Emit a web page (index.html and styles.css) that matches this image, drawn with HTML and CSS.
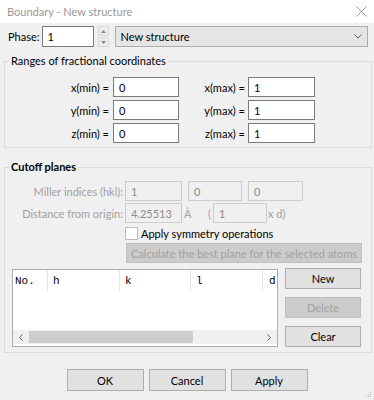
FILE: index.html
```html
<!DOCTYPE html>
<html lang="en">
  <head>
    <meta charset="UTF-8" />
    <meta name="viewport" content="width=device-width, initial-scale=1.0" />
    <title>Boundary - New structure</title>
    <link rel="stylesheet" href="styles.css">
  </head>
  <body>
    <div class="titlebar">
      <span class="title">Boundary - New structure</span>
      <svg class="close" width="11" height="11" viewBox="0 0 11 11">
        <path d="M0.5 0.5 L10.5 10.5 M10.5 0.5 L0.5 10.5" stroke="#9a9a9a" stroke-width="1" fill="none" />
      </svg>
    </div>

    <div class="dialog">
      <div class="phase-row">
        <span class="phase-label">Phase:</span>
        <input class="textbox phase-input" type="text" value="1" readonly />
        <div class="spin">
          <span class="spin-btn">
            <svg width="5" height="3" viewBox="0 0 5 3"><path d="M0 3 L2.5 0 L5 3 Z" fill="#8a8a8a" /></svg>
          </span>
          <span class="spin-btn">
            <svg width="5" height="3" viewBox="0 0 5 3"><path d="M0 0 L2.5 3 L5 0 Z" fill="#8a8a8a" /></svg>
          </span>
        </div>
        <div class="combo">
          <span>New structure</span>
          <svg width="8" height="5" viewBox="0 0 8 5">
            <path d="M0.5 0.5 L4 4 L7.5 0.5" stroke="#606060" stroke-width="1" fill="none" />
          </svg>
        </div>
      </div>

      <fieldset class="group ranges">
        <legend>Ranges of fractional coordinates</legend>
        <div class="range-grid">
          <span class="range-label">x(min) =</span>
          <input class="textbox" type="text" value="0" readonly />
          <span class="range-label second">x(max) =</span>
          <input class="textbox" type="text" value="1" readonly />

          <span class="range-label">y(min) =</span>
          <input class="textbox" type="text" value="0" readonly />
          <span class="range-label second">y(max) =</span>
          <input class="textbox" type="text" value="1" readonly />

          <span class="range-label">z(min) =</span>
          <input class="textbox" type="text" value="0" readonly />
          <span class="range-label second">z(max) =</span>
          <input class="textbox" type="text" value="1" readonly />
        </div>
      </fieldset>

      <fieldset class="group cutoff">
        <legend class="bold">Cutoff planes</legend>
        <div class="cutoff-body">
          <div class="form-row">
            <span class="dim-label">Miller indices (hkl):</span>
            <input class="textbox disabled w57" type="text" value="1" disabled />
            <input class="textbox disabled w54" type="text" value="0" disabled />
            <input class="textbox disabled w55" type="text" value="0" disabled />
          </div>
          <div class="form-row">
            <span class="dim-label">Distance from origin:</span>
            <input class="textbox disabled w57" type="text" value="4.25513" disabled />
            <span class="unit">Å</span>
            <span class="paren">(</span>
            <input class="textbox disabled w54 times" type="text" value="1" disabled />
            <span class="times-d">x d)</span>
          </div>
          <div class="check-row">
            <span class="checkbox"></span>
            <span>Apply symmetry operations</span>
          </div>
          <button class="btn disabled calc" disabled>Calculate the best plane for the selected atoms</button>

          <div class="list-area">
            <div class="listview">
              <div class="list-header">
                <span class="col c-no">No.</span>
                <span class="col c-h">h</span>
                <span class="col c-k">k</span>
                <span class="col c-l">l</span>
                <span class="col c-d">d</span>
              </div>
              <div class="list-rows"></div>
              <div class="hscroll">
                <span class="arrow">
                  <svg width="4" height="7" viewBox="0 0 4 7"><path d="M3.5 0.5 L0.5 3.5 L3.5 6.5" stroke="#606060" fill="none" /></svg>
                </span>
                <div class="track"><div class="thumb"></div></div>
                <span class="arrow">
                  <svg width="4" height="7" viewBox="0 0 4 7"><path d="M0.5 0.5 L3.5 3.5 L0.5 6.5" stroke="#606060" fill="none" /></svg>
                </span>
              </div>
            </div>
            <div class="side-buttons">
              <button class="btn">New</button>
              <button class="btn disabled" disabled>Delete</button>
              <button class="btn">Clear</button>
            </div>
          </div>
        </div>
      </fieldset>

      <div class="footer-buttons">
        <button class="btn wide">OK</button>
        <button class="btn wide">Cancel</button>
        <button class="btn wide">Apply</button>
      </div>
    </div>

    <svg class="grip" width="7" height="7" viewBox="0 0 7 7">
      <rect x="5" y="1" width="1" height="1" fill="#b0b0b0" />
      <rect x="3" y="3" width="1" height="1" fill="#b0b0b0" />
      <rect x="5" y="3" width="1" height="1" fill="#b0b0b0" />
      <rect x="1" y="5" width="1" height="1" fill="#b0b0b0" />
      <rect x="3" y="5" width="1" height="1" fill="#b0b0b0" />
      <rect x="5" y="5" width="1" height="1" fill="#b0b0b0" />
    </svg>
  </body>
</html>
```

FILE: styles.css
```css
* {
  box-sizing: border-box;
}
html,
body {
  margin: 0;
  padding: 0;
}
body {
  width: 374px;
  height: 400px;
  background-color: #f0f0f0;
  font-family: Lato, "Noto Sans", sans-serif;
  font-size: 11px;
  color: #000;
  position: relative;
  overflow: hidden;
}
input,
button {
  font-family: Lato, "Noto Sans", sans-serif;
  font-size: 11px;
}

/* title bar */
.titlebar {
  height: 23px;
  background-color: #fff;
  display: flex;
  align-items: center;
  justify-content: space-between;
  padding: 0 7px 1px 7px;
}
.title {
  color: #999;
  font-size: 11px;
}

/* phase row */
.phase-row {
  display: flex;
  align-items: center;
  height: 21px;
  margin-top: 3px;
  padding-left: 8px;
}
.phase-label {
  margin-right: 2px;
}
.textbox {
  height: 20px;
  border: 1px solid #7a7a7a;
  background-color: #fff;
  padding: 0 5px;
  margin: 0;
  color: #000;
  outline: none;
}
.phase-input {
  width: 52px;
  height: 21px;
}
.spin {
  display: flex;
  flex-direction: column;
  width: 11px;
  height: 21px;
  margin-left: 4px;
  gap: 1px;
}
.spin-btn {
  flex: 1;
  display: flex;
  align-items: center;
  justify-content: center;
  background-color: #ececec;
  border: 1px solid #dadada;
}
.combo {
  display: flex;
  align-items: center;
  justify-content: space-between;
  width: 253px;
  height: 21px;
  margin-left: 6px;
  padding: 0 5px 0 5px;
  background-color: #e5e5e5;
  border: 1px solid #adadad;
}

/* group boxes */
.group {
  border: 1px solid #dcdcdc;
  margin: 0 2px 0 4px;
  min-width: 0;
}
.group legend {
  padding: 0 2px;
  margin-left: 4px;
  line-height: 16px;
}
.group legend.bold {
  font-weight: 700;
}
.ranges {
  margin-top: 6px;
  padding: 8px 0 4px 0;
}
.range-grid {
  display: grid;
  grid-template-columns: 108px 66px 69px 67px;
  row-gap: 3px;
  align-items: center;
}
.range-grid .textbox {
  width: 100%;
}
.range-label {
  text-align: right;
  padding-right: 4px;
  white-space: nowrap;
}
.range-label.second {
  padding-right: 3px;
}

.cutoff {
  margin-top: 11px;
  padding: 6px 10px 5px 0;
}
.cutoff-body {
  padding-left: 7px;
}
.form-row {
  display: flex;
  align-items: center;
  height: 20px;
  margin-bottom: 2px;
}
.dim-label {
  width: 113px;
  text-align: right;
  padding-right: 2px;
  color: #a0a0a0;
  white-space: nowrap;
}
.textbox.disabled {
  background-color: #f0f0f0;
  border-color: #cccccc;
  color: #8d8d8d;
  margin-right: 6px;
}
.w57 {
  width: 57px;
}
.w54 {
  width: 54px;
}
.w55 {
  width: 55px;
}
.unit {
  color: #a0a0a0;
  width: 24px;
  margin-left: -4px;
}
.paren {
  color: #a0a0a0;
  width: 5px;
}
.textbox.times {
  margin-right: 1px;
}
.times-d {
  color: #a0a0a0;
}
.check-row {
  display: flex;
  align-items: center;
  gap: 3px;
  height: 16px;
  padding-left: 113px;
  color: #000;
}
.checkbox {
  width: 13px;
  height: 13px;
  border: 1px solid #bcbcbc;
  background-color: #fff;
}

/* buttons */
.btn {
  height: 21px;
  margin: 0;
  padding: 0;
  border: 1px solid #adadad;
  background-color: #e1e1e1;
  color: #000;
}
.btn.disabled {
  background-color: #cccccc;
  border-color: #bfbfbf;
  color: #a0a0a0;
}
.calc {
  display: block;
  width: 236px;
  height: 20px;
  margin: 2px 0 0 114px;
  white-space: nowrap;
}

/* list view */
.list-area {
  display: flex;
  gap: 7px;
  margin-top: 6px;
}
.listview {
  width: 266px;
  height: 78px;
  border: 1px solid #acacac;
  background-color: #fff;
  display: flex;
  flex-direction: column;
}
.list-header {
  display: flex;
  height: 22px;
  align-items: stretch;
  font-family: "Liberation Mono", monospace;
  font-size: 11px;
  overflow: hidden;
  white-space: nowrap;
}
.col {
  display: flex;
  align-items: center;
  padding-left: 5px;
  border-right: 1px solid #e5e5e5;
  flex-shrink: 0;
}
.c-no {
  width: 35px;
  padding-left: 2px;
}
.c-h {
  width: 72px;
}
.c-k {
  width: 71px;
}
.c-l {
  width: 72px;
}
.c-d {
  width: 40px;
  padding-left: 6px;
  border-right: none;
}
.list-rows {
  flex: 1;
}
.hscroll {
  display: flex;
  align-items: stretch;
  height: 14px;
  margin-bottom: 2px;
  background-color: #f0f0f0;
}
.arrow {
  width: 16px;
  display: flex;
  align-items: center;
  justify-content: center;
}
.track {
  flex: 1;
  padding: 1px 0;
}
.thumb {
  width: 164px;
  height: 100%;
  background-color: #cdcdcd;
}
.side-buttons {
  display: flex;
  flex-direction: column;
  gap: 8px;
  margin-top: -1px;
}
.side-buttons .btn {
  width: 76px;
  height: 21px;
}

/* dialog buttons */
.footer-buttons {
  display: flex;
  justify-content: center;
  gap: 5px;
  margin-top: 16px;
}
.btn.wide {
  width: 77px;
  height: 22px;
}
.grip {
  position: absolute;
  right: 2px;
  bottom: 2px;
}
```
